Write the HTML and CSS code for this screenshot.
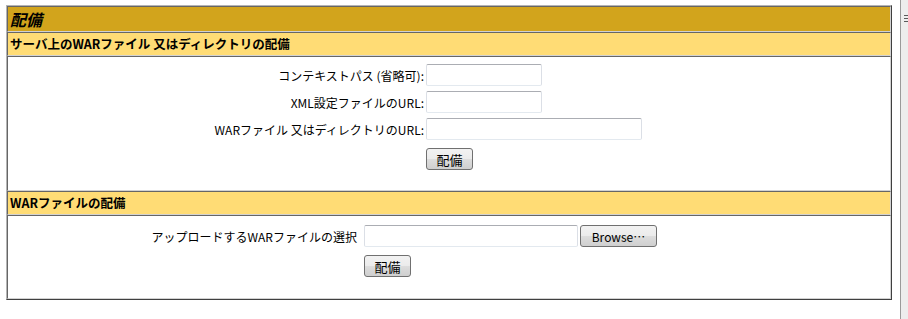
FILE: index.html
```html
<!DOCTYPE html>
<html lang="ja">
<head>
    <meta charset="UTF-8">
    <meta name="viewport" content="width=device-width, initial-scale=1.0">
    <title>配備</title>
    <link rel="stylesheet" href="styles.css">
</head>
<body>
    <div class="page">
        <!-- Deploy panel -->
        <div class="panel">
            <div class="cell title">配備</div>
            <div class="cell header">サーバ上のWARファイル 又はディレクトリの配備</div>

            <div class="cell content">
                <form class="form server-form" method="post">
                    <label for="deploy-path">コンテキストパス (省略可):</label>
                    <input type="text" id="deploy-path" class="short">

                    <label for="deploy-config">XML設定ファイルのURL:</label>
                    <input type="text" id="deploy-config" class="short">

                    <label for="deploy-war">WARファイル 又はディレクトリのURL:</label>
                    <input type="text" id="deploy-war" class="long">

                    <span></span>
                    <button type="button" class="btn submit">配備</button>
                </form>
            </div>

            <div class="cell header">WARファイルの配備</div>

            <div class="cell content">
                <form class="form upload-form" method="post">
                    <label for="upload-war">アップロードするWARファイルの選択</label>
                    <div class="file">
                        <input type="text" id="upload-war" class="file-name" readonly>
                        <button type="button" class="btn browse">Browse…</button>
                    </div>

                    <span></span>
                    <button type="button" class="btn submit">配備</button>
                </form>
            </div>
        </div>
    </div>

    <!-- right window edge -->
    <div class="edge">
        <svg class="grip" width="4" height="8" viewBox="0 0 4 8">
            <path d="M0 0.5h4M0 3.5h4M0 6.5h4" stroke="#5a5a5a" stroke-width="1"/>
        </svg>
    </div>
</body>
</html>
```

FILE: styles.css
```css
* {
    box-sizing: border-box;
}

body {
    display: flex;
    margin: 0;
    height: 100vh;
    font-family: "Noto Sans CJK JP", "Liberation Sans", sans-serif;
    font-size: 12px;
    color: #000;
    background-color: #fff;
}

.page {
    width: 901px;
    padding: 5px 0 0 6px;
}

.panel {
    width: 886px;
    border: 1px solid;
    border-color: #b4b4b4 #404040 #404040 #b4b4b4;
}

.cell {
    border: 1px solid;
    border-color: #666 #d2d2d2 #d2d2d2 #666;
    padding: 0 2px;
}

.title {
    height: 26px;
    line-height: 24px;
    font-size: 16px;
    font-weight: bold;
    font-style: italic;
    background-color: #d2a41c;
}

.header {
    height: 24px;
    line-height: 22px;
    font-size: 12.5px;
    font-weight: bold;
    background-color: #ffdc75;
}

.content {
    background-color: #fff;
}

.form {
    display: grid;
    align-items: center;
}

.server-form {
    grid-template-columns: 210px auto;
    column-gap: 2px;
    row-gap: 5px;
    margin-left: 204px;
    padding: 7px 0 20px;
}

.server-form .submit {
    margin-top: 3px;
}

.upload-form {
    grid-template-columns: 207px auto;
    column-gap: 7px;
    row-gap: 8px;
    margin-left: 140px;
    padding: 9px 0 21px;
}

label {
    text-align: right;
    white-space: nowrap;
}

input[type="text"] {
    height: 22px;
    padding: 1px 3px;
    font: inherit;
    border: 1px solid;
    border-color: #abadb3 #dbdfe6 #e3e9ef #dbdfe6;
    border-radius: 2px;
    background: #fff;
}

.short {
    width: 116px;
}

.long {
    width: 216px;
}

.file {
    display: flex;
    align-items: center;
    gap: 2px;
}

.file-name {
    width: 214px;
}

.btn {
    height: 22px;
    padding: 0 8px;
    font-family: "Noto Sans CJK JP", "Liberation Sans", sans-serif;
    font-size: 13px;
    color: #000;
    border: 1px solid #707070;
    border-radius: 3px;
    background: linear-gradient(#f2f2f2 0%, #ebebeb 50%, #dddddd 51%, #cfcfcf 100%);
    cursor: pointer;
}

.submit {
    width: 47px;
    justify-self: start;
}

.browse {
    width: 77px;
    font-size: 12px;
}

.edge {
    flex: 1;
    border-left: 1px solid #9a9a9a;
    background-color: #ededed;
    padding: 15px 0 0 3px;
}

.grip {
    display: block;
}
```
